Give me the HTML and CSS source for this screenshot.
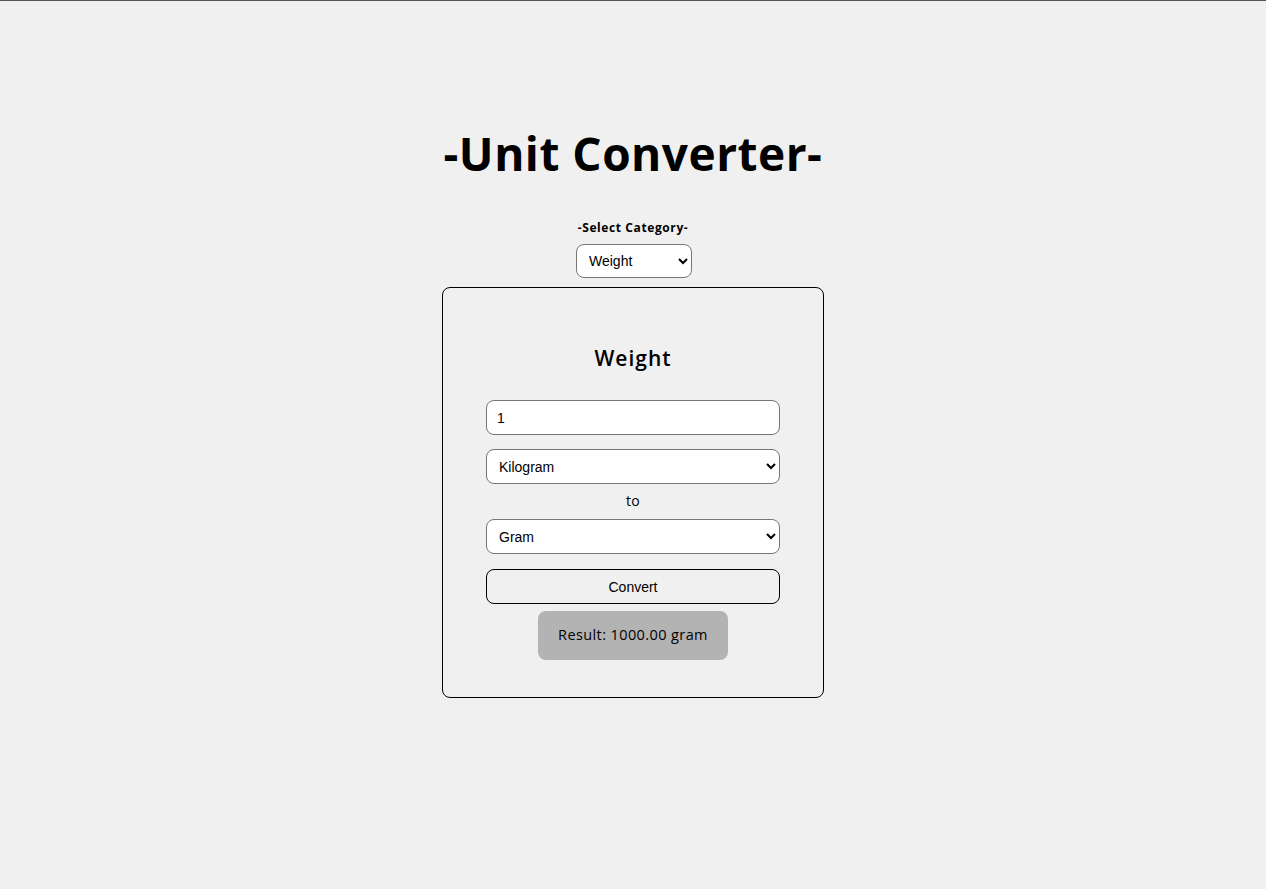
FILE: index.html
```html
<!DOCTYPE html>
<html lang="en">
<head>
<meta charset="utf-8">
<title>Unit Converter</title>
<link rel="stylesheet" href="styles.css">
</head>
<body>
<main class="page">
  <h1 class="title">-Unit Converter-</h1>
  <label class="cat-label" for="category">-Select Category-</label>
  <select id="category" class="cat-select">
    <option>Weight</option>
    <option>Length</option>
    <option>Temperature</option>
  </select>
  <section class="card">
    <h2 class="card-title">Weight</h2>
    <input class="field" type="text" value="1">
    <select class="field field-select">
      <option>Kilogram</option>
      <option>Gram</option>
    </select>
    <div class="to">to</div>
    <select class="field field-select">
      <option>Gram</option>
      <option>Kilogram</option>
    </select>
    <button class="convert" type="button">Convert</button>
    <div class="result">Result: 1000.00 gram</div>
  </section>
</main>
</body>
</html>
```
FILE: styles.css
```css
html, body {
  margin: 0;
  padding: 0;
  background: #f0f0f0;
}
body {
  border-top: 1px solid #555;
  min-height: 888px;
  box-sizing: border-box;
  font-family: "Open Sans", "Liberation Sans", sans-serif;
  color: #000;
}
.page {
  display: flex;
  flex-direction: column;
  align-items: center;
  padding-top: 122px;
}
.title {
  margin: 0;
  font-size: 46px;
  font-weight: 700;
  line-height: 60px;
  letter-spacing: 0.5px;
}
.cat-label {
  margin-top: 36px;
  font-size: 12px;
  font-weight: 700;
  line-height: 18px;
  letter-spacing: 0.6px;
}
.cat-select {
  margin-top: 7px;
  margin-left: 2px;
  width: 116px;
  height: 34px;
  border: 1px solid #767676;
  border-radius: 8px;
  background: #fff;
  font-family: "Liberation Sans", Arial, sans-serif;
  font-size: 14px;
  padding: 0 6px 0 8px;
  color: #000;
}
.card {
  margin-top: 9px;
  width: 382px;
  height: 411px;
  box-sizing: border-box;
  border: 1px solid #000;
  border-radius: 8px;
  display: flex;
  flex-direction: column;
  align-items: center;
  padding-top: 56px;
}
.card-title {
  margin: 0;
  font-size: 21px;
  font-weight: 600;
  line-height: 28px;
  letter-spacing: 1px;
}
.field {
  width: 294px;
  height: 35px;
  box-sizing: border-box;
  border: 1px solid #767676;
  border-radius: 8px;
  background: #fff;
  font-family: "Liberation Sans", Arial, sans-serif;
  font-size: 14px;
  color: #000;
  padding: 0 8px 0 10px;
}
select.field {
  padding-left: 8px;
}
input.field {
  margin-top: 28px;
}
.field-select {
  margin-top: 14px;
}
.to + .field-select {
  margin-top: 0;
}
.to {
  font-size: 14px;
  line-height: 20px;
  margin: 7px 0 8px;
  letter-spacing: 0.3px;
}
.convert {
  margin-top: 15px;
  width: 294px;
  height: 35px;
  box-sizing: border-box;
  border: 1px solid #000;
  border-radius: 8px;
  background: #f0f0f0;
  font-family: "Liberation Sans", Arial, sans-serif;
  font-size: 14px;
  color: #000;
}
.result {
  margin-top: 7px;
  background: #b3b3b3;
  border-radius: 8px;
  padding: 0 20px;
  height: 49px;
  line-height: 47px;
  font-size: 14.5px;
  font-weight: 500;
  letter-spacing: 0.4px;
}
```
